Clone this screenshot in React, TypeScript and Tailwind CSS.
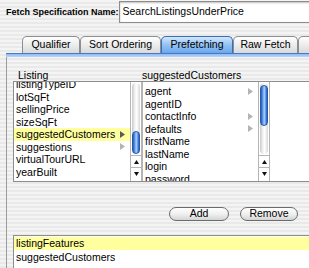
import React from 'react';

const Disclosure = ({ dark }: { dark?: boolean }) => (
  <svg width="5" height="7" viewBox="0 0 5 7" className="shrink-0">
    <polygon points="0,0 5,3.5 0,7" fill={dark ? '#5a5a5a' : '#b4b4b4'} />
  </svg>
);

const ArrowBtn = ({ up }: { up?: boolean }) => (
  <div className="h-[12px] flex items-center justify-center border-t border-[#b5b5b5] bg-white">
    <svg width="5" height="4" viewBox="0 0 5 4">
      {up ? <polygon points="2.5,0 5,4 0,4" fill="#111" /> : <polygon points="0,0 5,0 2.5,4" fill="#111" />}
    </svg>
  </div>
);

const Scroller = ({ thumbTop, thumbH }: { thumbTop: string; thumbH: string }) => (
  <div className="w-[12px] flex flex-col border-l border-r border-[#b5b5b5] bg-white">
    <div className="flex-1 px-[1px] pt-[1px] pb-[1px]">
      <div className="h-full rounded-full bg-[linear-gradient(to_right,#c9c9c9,#f1f1f1_35%,#ffffff_60%,#d6d6d6)] flex flex-col items-stretch">
        <div
          className={`${thumbTop} ${thumbH} rounded-full border border-[#2a55a8] bg-[linear-gradient(to_right,#2458c4,#5b98ea_30%,#a8d2fb_55%,#5b98ea_78%,#2458c4)]`}
        />
      </div>
    </div>
    <ArrowBtn up />
    <ArrowBtn />
    <div className="h-[2px]" />
  </div>
);

type Row = { name: string; more?: boolean; selected?: boolean };

const listing: Row[] = [
  { name: 'listingTypeID' },
  { name: 'lotSqFt' },
  { name: 'sellingPrice' },
  { name: 'sizeSqFt' },
  { name: 'suggestedCustomers', more: true, selected: true },
  { name: 'suggestions', more: true },
  { name: 'virtualTourURL' },
  { name: 'yearBuilt' },
];

const customers: Row[] = [
  { name: 'agent', more: true },
  { name: 'agentID' },
  { name: 'contactInfo', more: true },
  { name: 'defaults', more: true },
  { name: 'firstName' },
  { name: 'lastName' },
  { name: 'login' },
  { name: 'password' },
];

const ListRow = ({ row }: { row: Row }) => (
  <div
    className={`h-[12.5px] leading-[12.5px] flex items-center justify-between pl-[2px] pr-[5px] whitespace-nowrap ${
      row.selected ? 'bg-[#ffff9e]' : ''
    }`}
  >
    <span>{row.name}</span>
    {row.more && <Disclosure dark={row.selected} />}
  </div>
);

const tabs = [
  { label: 'Qualifier', w: 'w-[58px]' },
  { label: 'Sort Ordering', w: 'w-[81px]' },
  { label: 'Prefetching', w: 'w-[72px]', active: true },
  { label: 'Raw Fetch', w: 'w-[65px]' },
  { label: '', w: 'w-[20px]' },
];

export default function App() {
  return (
    <div className="w-[309px] h-[268px] overflow-hidden flex flex-col font-['Liberation_Sans',Arial,sans-serif] text-black bg-[repeating-linear-gradient(to_bottom,#f4f4f4_0px,#f4f4f4_2px,#e9e9e9_2px,#e9e9e9_4px)]">
      {/* name field */}
      <div className="h-[24px] pt-[1px] flex items-start shrink-0">
        <span className="ml-[6px] w-[115px] h-[22px] leading-[22px] text-[9px] font-bold whitespace-nowrap">
          Fetch Specification Name:
        </span>
        <div className="h-[22px] w-[220px] shrink-0 bg-white border border-r-0 border-[#8c8c8c] shadow-[inset_0_1px_2px_rgba(0,0,0,0.25)] flex items-center pl-[3px] text-[10.5px]">
          SearchListingsUnderPrice
        </div>
      </div>

      {/* tabs */}
      <div className="mt-[12px] h-[17px] flex pl-[22px] shrink-0">
        {tabs.map((t, i) => (
          <div
            key={i}
            className={`${t.w} shrink-0 h-full rounded-t-[5px] border border-b-0 flex items-center justify-center text-[10.5px] whitespace-nowrap ${
              t.active
                ? 'border-[#3b6cb8] bg-[linear-gradient(to_bottom,#d2e7fc,#92c2f4_50%,#6aa8ec)]'
                : 'border-[#8e8e8e] bg-[linear-gradient(to_bottom,#ffffff,#ececec_50%,#d9d9d9)]'
            }`}
          >
            {t.label}
          </div>
        ))}
      </div>
      <div className="ml-[6px] h-[4px] shrink-0 border-t border-[#4a78c4] bg-[linear-gradient(to_bottom,#8fbaf1,#b7d5f8)]" />

      {/* panel */}
      <div className="ml-[6px] flex-1 flex flex-col border-l border-[#9c9c9c]">
        <div className="h-[24px] flex items-end text-[10.5px] leading-[12px] shrink-0">
          <span className="ml-[11px] w-[124px]">Listing</span>
          <span>suggestedCustomers</span>
        </div>

        <div className="ml-[6px] h-[101px] shrink-0 flex border-t border-b border-l border-[#8d8d8d] bg-white text-[10.5px]">
          <div className="w-[128px] flex">
            <div className="flex-1 overflow-hidden">
              <div className="-mt-[4px]">
                {listing.map((r) => (
                  <ListRow key={r.name} row={r} />
                ))}
              </div>
            </div>
            <Scroller thumbTop="mt-[48px]" thumbH="h-[23px]" />
          </div>
          <div className="w-[128px] flex border-l border-[#b5b5b5]">
            <div className="flex-1 overflow-hidden pt-[3px]">
              {customers.map((r) => (
                <ListRow key={r.name} row={r} />
              ))}
            </div>
            <Scroller thumbTop="mt-[2px]" thumbH="h-[41px]" />
          </div>
          <div className="flex-1" />
        </div>

        {/* buttons */}
        <div className="mt-[25px] h-[14px] flex shrink-0 text-[10.5px]">
          <div className="ml-[162px] w-[60px] h-full rounded-full border border-[#6b6b6b] bg-[linear-gradient(to_bottom,#ffffff,#f0f0f0_50%,#d4d4d4)] flex items-center justify-center">
            Add
          </div>
          <div className="ml-[11px] w-[58px] h-full rounded-full border border-[#6b6b6b] bg-[linear-gradient(to_bottom,#ffffff,#f0f0f0_50%,#d4d4d4)] flex items-center justify-center">
            Remove
          </div>
        </div>

        {/* prefetch list */}
        <div className="mt-[14px] ml-[6px] flex-1 border-t border-l border-[#8d8d8d] bg-white text-[10.5px] pt-[1px]">
          <ListRow row={{ name: 'listingFeatures', selected: true }} />
          <div className="h-[1px]" />
          <ListRow row={{ name: 'suggestedCustomers' }} />
        </div>
      </div>
    </div>
  );
}
